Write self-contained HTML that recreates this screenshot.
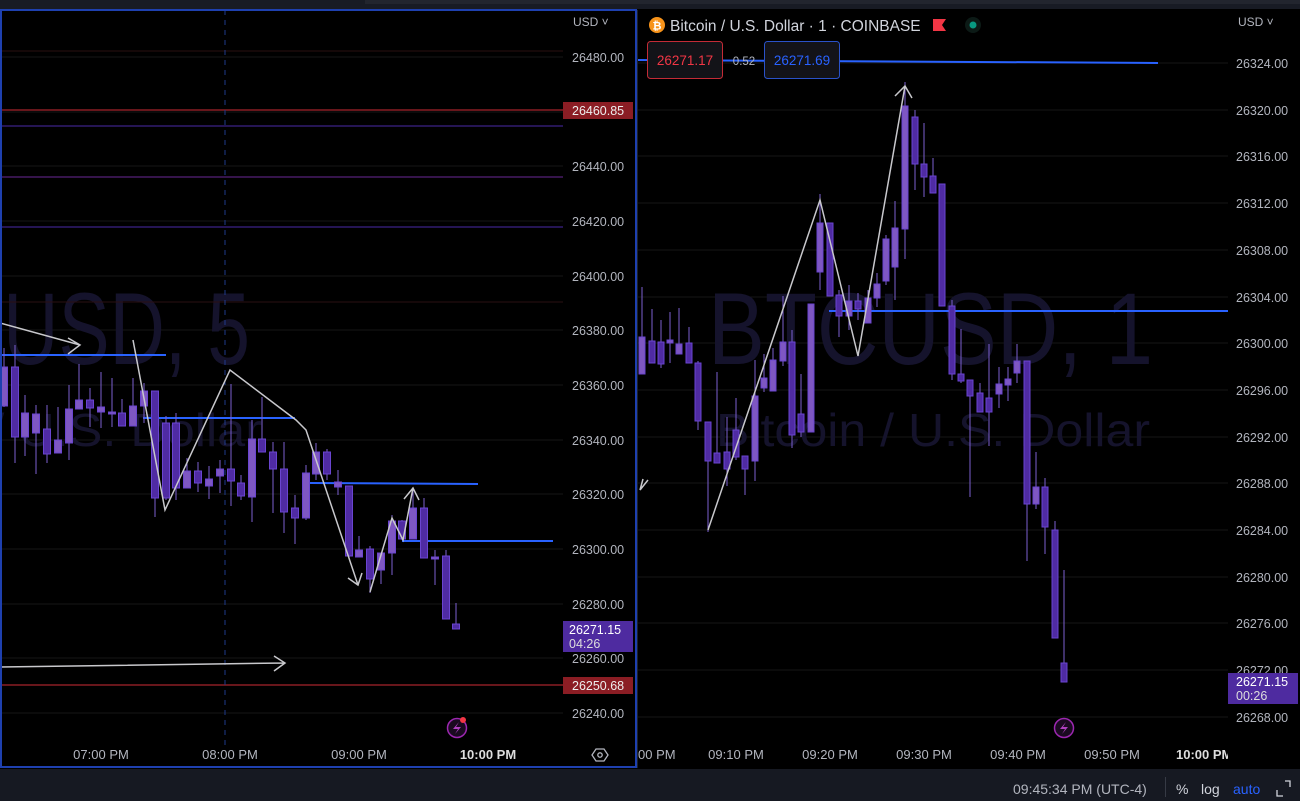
<!DOCTYPE html><html><head><meta charset="utf-8"><style>
body{margin:0;width:1300px;height:801px;background:#000;overflow:hidden;font-family:"Liberation Sans",sans-serif}
svg{position:absolute;left:0;top:0}
</style></head><body>
<svg width="1300" height="801" viewBox="0 0 1300 801" font-family="Liberation Sans, sans-serif">
<rect width="1300" height="801" fill="#000"/>
<rect x="0" y="0" width="1300" height="9" fill="#181b24"/>
<rect x="365" y="0" width="935" height="4" fill="#22252e"/>
<rect x="0" y="769" width="1300" height="32" fill="#161922"/>
<g stroke="#161616" stroke-width="1">
<line x1="0" y1="57" x2="563" y2="57"/><line x1="0" y1="112" x2="563" y2="112"/><line x1="0" y1="166" x2="563" y2="166"/><line x1="0" y1="221" x2="563" y2="221"/><line x1="0" y1="276" x2="563" y2="276"/><line x1="0" y1="330" x2="563" y2="330"/><line x1="0" y1="385" x2="563" y2="385"/><line x1="0" y1="440" x2="563" y2="440"/><line x1="0" y1="494" x2="563" y2="494"/><line x1="0" y1="549" x2="563" y2="549"/><line x1="0" y1="604" x2="563" y2="604"/><line x1="0" y1="658" x2="563" y2="658"/><line x1="0" y1="713" x2="563" y2="713"/>
</g>
<g stroke="#161616">
<line x1="638" y1="63" x2="1228" y2="63"/><line x1="638" y1="110" x2="1228" y2="110"/><line x1="638" y1="156" x2="1228" y2="156"/><line x1="638" y1="203" x2="1228" y2="203"/><line x1="638" y1="250" x2="1228" y2="250"/><line x1="638" y1="297" x2="1228" y2="297"/><line x1="638" y1="343" x2="1228" y2="343"/><line x1="638" y1="390" x2="1228" y2="390"/><line x1="638" y1="437" x2="1228" y2="437"/><line x1="638" y1="483" x2="1228" y2="483"/><line x1="638" y1="530" x2="1228" y2="530"/><line x1="638" y1="577" x2="1228" y2="577"/><line x1="638" y1="623" x2="1228" y2="623"/><line x1="638" y1="670" x2="1228" y2="670"/><line x1="638" y1="717" x2="1228" y2="717"/>
</g>
<g fill="#15132c">
<text x="-150" y="364" font-size="102" textLength="400" lengthAdjust="spacingAndGlyphs">BTCUSD, 5</text>
<text x="-175" y="446" font-size="46" textLength="437" lengthAdjust="spacingAndGlyphs">Bitcoin / U.S. Dollar</text>
<text x="708" y="364" font-size="102" textLength="445" lengthAdjust="spacingAndGlyphs">BTCUSD, 1</text>
<text x="716" y="446" font-size="46" textLength="434" lengthAdjust="spacingAndGlyphs">Bitcoin / U.S. Dollar</text>
</g>
<line x1="0" y1="51" x2="563" y2="51" stroke="#2a1010"/>
<line x1="0" y1="110" x2="563" y2="110" stroke="#8b1d24" stroke-width="1.5"/>
<line x1="0" y1="126" x2="563" y2="126" stroke="#4a2aa8"/>
<line x1="0" y1="177" x2="563" y2="177" stroke="#6a2896"/>
<line x1="0" y1="227" x2="563" y2="227" stroke="#4a2aa8"/>
<line x1="0" y1="302" x2="563" y2="302" stroke="#2a0f12"/>
<line x1="0" y1="685" x2="563" y2="685" stroke="#8b1d24" stroke-width="1.5"/>
<line x1="225" y1="10" x2="225" y2="745" stroke="#1e3a8a" stroke-dasharray="5,5"/>
<g stroke="#2962ff" stroke-width="2">
<line x1="0" y1="355" x2="166" y2="355"/><line x1="143" y1="418" x2="295" y2="418"/><line x1="310" y1="483" x2="478" y2="484"/><line x1="402" y1="541" x2="553" y2="541"/>
<line x1="636" y1="60" x2="1158" y2="63"/><line x1="829" y1="311" x2="1228" y2="311"/>
</g>
<g stroke="#7b5fd0" stroke-width="1">
<path d="M4 348V407M15 345V463M25 395V456M36 405V474M47 405V463M58 407V453M69 385V460M79 364V409M90 388V427M101 372V428M112 378V427M122 399V426M133 378V426M144 383V423M155 391V517M166 416V500M176 413V500M187 458V488M198 462V492M209 466V499M220 460V493M231 384V506M241 475V500M252 420V522M262 397V452M273 442V513M284 442V533M295 495V544M306 465V520M316 443V480M327 449V480M338 470V495M349 486V557M359 536V557M370 546V593M381 553V584M392 515V575M402 520V540M413 487V539M424 498V558M435 550V585M446 550V619M456 603V629"/>
<path d="M642 287V374M652 309V363M661 320V368M670 312V363M679 308V354M689 327V363M698 361V430M708 422V532M717 372V463M727 417V486M736 398V460M745 456V495M755 360V481M764 354V392M773 348V391M783 296V366M792 330V448M801 374V437M811 304V432M820 194V290M830 223V296M839 290V337M849 285V330M858 293V320M868 290V323M877 273V307M886 235V285M895 201V300M905 82V259M915 110V190M924 123V197M933 158V193M942 184V306M952 300V380M961 329V383M970 380V497M980 383V412M989 344V446M999 367V408M1008 367V401M1017 344V383M1027 361V561M1036 452V509M1045 478V554M1055 521V638M1064 570V682"/>
</g>
<g stroke="#6a45d0" stroke-width="1">
<g fill="#7e57c2">
<rect x="0.5" y="367" width="7" height="39"/><rect x="21.5" y="413" width="7" height="24"/><rect x="32.5" y="414" width="7" height="19"/><rect x="54.5" y="440" width="7" height="13"/><rect x="65.5" y="409" width="7" height="34"/><rect x="75.5" y="400" width="7" height="9"/><rect x="97.5" y="407" width="7" height="5"/><rect x="108.5" y="412" width="7" height="2"/><rect x="129.5" y="406" width="7" height="20"/><rect x="140.5" y="391" width="7" height="15"/><rect x="183.5" y="471" width="7" height="17"/><rect x="205.5" y="479" width="7" height="7"/><rect x="216.5" y="469" width="7" height="7"/><rect x="248.5" y="439" width="7" height="58"/><rect x="302.5" y="473" width="7" height="45"/><rect x="312.5" y="452" width="7" height="22"/><rect x="334.5" y="482" width="7" height="5"/><rect x="355.5" y="550" width="7" height="7"/><rect x="377.5" y="553" width="7" height="17"/><rect x="388.5" y="521" width="7" height="32"/><rect x="409.5" y="508" width="7" height="31"/><rect x="431.5" y="557" width="7" height="2"/>
<rect x="639" y="337" width="6" height="37"/><rect x="667" y="340" width="6" height="3"/><rect x="676" y="344" width="6" height="10"/><rect x="752" y="396" width="6" height="65"/><rect x="761" y="378" width="6" height="10"/><rect x="770" y="360" width="6" height="31"/><rect x="780" y="342" width="6" height="19"/><rect x="808" y="304" width="6" height="128"/><rect x="817" y="223" width="6" height="49"/><rect x="846" y="301" width="6" height="15"/><rect x="865" y="298" width="6" height="25"/><rect x="874" y="284" width="6" height="14"/><rect x="883" y="239" width="6" height="42"/><rect x="892" y="228" width="6" height="39"/><rect x="902" y="106" width="6" height="123"/><rect x="996" y="384" width="6" height="10"/><rect x="1005" y="379" width="6" height="6"/><rect x="1014" y="361" width="6" height="12"/><rect x="1033" y="487" width="6" height="17"/>
</g>
<g fill="#4f2ba3">
<rect x="11.5" y="367" width="7" height="70"/><rect x="43.5" y="429" width="7" height="25"/><rect x="86.5" y="400" width="7" height="8"/><rect x="118.5" y="413" width="7" height="13"/><rect x="151.5" y="391" width="7" height="107"/><rect x="162.5" y="423" width="7" height="75"/><rect x="172.5" y="423" width="7" height="65"/><rect x="194.5" y="471" width="7" height="12"/><rect x="227.5" y="469" width="7" height="12"/><rect x="237.5" y="483" width="7" height="13"/><rect x="258.5" y="439" width="7" height="13"/><rect x="269.5" y="452" width="7" height="17"/><rect x="280.5" y="469" width="7" height="43"/><rect x="291.5" y="508" width="7" height="10"/><rect x="323.5" y="452" width="7" height="22"/><rect x="345.5" y="486" width="7" height="70"/><rect x="366.5" y="549" width="7" height="30"/><rect x="398.5" y="521" width="7" height="18"/><rect x="420.5" y="508" width="7" height="50"/><rect x="442.5" y="556" width="7" height="63"/><rect x="452.5" y="624" width="7" height="5"/>
<rect x="649" y="341" width="6" height="22"/><rect x="658" y="342" width="6" height="22"/><rect x="686" y="343" width="6" height="20"/><rect x="695" y="363" width="6" height="58"/><rect x="705" y="422" width="6" height="39"/><rect x="714" y="453" width="6" height="10"/><rect x="724" y="452" width="6" height="17"/><rect x="733" y="430" width="6" height="27"/><rect x="742" y="456" width="6" height="13"/><rect x="789" y="342" width="6" height="93"/><rect x="798" y="414" width="6" height="18"/><rect x="827" y="223" width="6" height="73"/><rect x="836" y="295" width="6" height="21"/><rect x="855" y="301" width="6" height="8"/><rect x="912" y="117" width="6" height="47"/><rect x="921" y="164" width="6" height="13"/><rect x="930" y="176" width="6" height="17"/><rect x="939" y="184" width="6" height="122"/><rect x="949" y="306" width="6" height="68"/><rect x="958" y="374" width="6" height="7"/><rect x="967" y="380" width="6" height="16"/><rect x="977" y="393" width="6" height="19"/><rect x="986" y="398" width="6" height="14"/><rect x="1024" y="361" width="6" height="143"/><rect x="1042" y="487" width="6" height="40"/><rect x="1052" y="530" width="6" height="108"/><rect x="1061" y="663" width="6" height="19"/>
</g>
</g>
<g stroke="#c8c8cc" stroke-width="1.5" fill="none">
<path d="M0 323L80 345M68 338L80 345L68 354"/>
<path d="M133 340L165 510L230 370L296 420L306 430L358 585M348 578L358 585L362 573"/>
<path d="M370 592L392 518L403 540L413 488M404 499L413 488L419 500"/>
<path d="M0 667L285 663M274 656L285 663L274 671"/>
<path d="M643 479L640 490L648 480"/>
<path d="M708 530L820 200L858 356L905 86M895 96L905 86L912 98"/>
</g>
<rect x="1" y="10" width="635" height="757" fill="none" stroke="#1e40af" stroke-width="2"/>
<line x1="637.5" y1="10" x2="637.5" y2="768" stroke="#1e222d"/>
<g fill="#b2b5be" font-size="12.5">
<text x="573" y="26" font-size="12">USD ˅</text>
<text x="572" y="62">26480.00</text><text x="572" y="171">26440.00</text><text x="572" y="226">26420.00</text><text x="572" y="281">26400.00</text><text x="572" y="335">26380.00</text><text x="572" y="390">26360.00</text><text x="572" y="445">26340.00</text><text x="572" y="499">26320.00</text><text x="572" y="554">26300.00</text><text x="572" y="609">26280.00</text><text x="572" y="663">26260.00</text><text x="572" y="718">26240.00</text>
</g>
<rect x="563" y="102" width="70" height="17" fill="#8b1d24"/><text x="572" y="115" fill="#eee" font-size="12.5">26460.85</text>
<rect x="563" y="677" width="70" height="17" fill="#8b1d24"/><text x="572" y="690" fill="#eee" font-size="12.5">26250.68</text>
<rect x="563" y="621" width="70" height="31" fill="#4e2ba0"/><text x="569" y="634" fill="#fff" font-size="12.5">26271.15</text><text x="569" y="648" fill="#ddd" font-size="12.5">04:26</text>
<g fill="#b2b5be" font-size="12.5">
<text x="1238" y="26" font-size="12">USD ˅</text>
<text x="1236" y="68">26324.00</text><text x="1236" y="115">26320.00</text><text x="1236" y="161">26316.00</text><text x="1236" y="208">26312.00</text><text x="1236" y="255">26308.00</text><text x="1236" y="302">26304.00</text><text x="1236" y="348">26300.00</text><text x="1236" y="395">26296.00</text><text x="1236" y="442">26292.00</text><text x="1236" y="488">26288.00</text><text x="1236" y="535">26284.00</text><text x="1236" y="582">26280.00</text><text x="1236" y="628">26276.00</text><text x="1236" y="675">26272.00</text><text x="1236" y="722">26268.00</text>
</g>
<rect x="1228" y="673" width="70" height="31" fill="#4e2ba0"/><text x="1236" y="686" fill="#fff" font-size="12.5">26271.15</text><text x="1236" y="700" fill="#ddd" font-size="12.5">00:26</text>
<g fill="#b2b5be" font-size="13" text-anchor="middle">
<text x="101" y="759">07:00 PM</text><text x="230" y="759">08:00 PM</text><text x="359" y="759">09:00 PM</text><text x="488" y="759" fill="#ddd" font-weight="bold">10:00 PM</text>
<text x="736" y="759">09:10 PM</text><text x="830" y="759">09:20 PM</text><text x="924" y="759">09:30 PM</text><text x="1018" y="759">09:40 PM</text><text x="1112" y="759">09:50 PM</text>
</g>
<text x="638" y="759" fill="#b2b5be" font-size="13">00 PM</text>
<svg x="1150" y="740" width="78" height="25"><text x="26" y="19" fill="#ddd" font-size="13" font-weight="bold">10:00 PM</text></svg>
<path d="M596 749L604 749L608 755L604 761L596 761L592 755Z" fill="none" stroke="#b2b5be" stroke-width="1.3"/><circle cx="600" cy="755" r="2.2" fill="none" stroke="#b2b5be" stroke-width="1.3"/>
<circle cx="457" cy="728" r="9.5" fill="#1a0a20" stroke="#9c27b0" stroke-width="1.5"/><path d="M459 722L453 729H458L455 734L461 727H456Z" fill="#b040c0"/><circle cx="463" cy="720" r="3" fill="#f23645"/>
<circle cx="1064" cy="728" r="9.5" fill="#1a0a20" stroke="#9c27b0" stroke-width="1.5"/><path d="M1066 722L1060 729H1065L1062 734L1068 727H1063Z" fill="#b040c0"/>
<circle cx="657" cy="25" r="8" fill="#f7931a"/><text x="657" y="29.5" font-size="11" fill="#fff" text-anchor="middle" font-weight="bold">₿</text>
<text x="670" y="31" fill="#d1d4dc" font-size="15.5">Bitcoin / U.S. Dollar · 1 · COINBASE</text>
<path d="M933 19H946L942 25L946 31H933Z" fill="#f23645"/>
<circle cx="973" cy="25" r="8" fill="#0c1a16"/><circle cx="973" cy="25" r="3.5" fill="#089981"/>
<rect x="647.5" y="41.5" width="75" height="37" rx="3" fill="#131318" stroke="#c42b36"/><text x="685" y="65" fill="#f23645" font-size="13.5" text-anchor="middle">26271.17</text>
<text x="744" y="65" fill="#b2b5be" font-size="11.5" text-anchor="middle">0.52</text>
<rect x="764.5" y="41.5" width="75" height="37" rx="3" fill="#131318" stroke="#2a52c9"/><text x="802" y="65" fill="#2962ff" font-size="13.5" text-anchor="middle">26271.69</text>
<text x="1013" y="794" fill="#b2b5be" font-size="14">09:45:34 PM (UTC-4)</text>
<line x1="1165.5" y1="777" x2="1165.5" y2="797" stroke="#363a45"/>
<text x="1176" y="794" fill="#d1d4dc" font-size="14">%</text>
<text x="1201" y="794" fill="#d1d4dc" font-size="14">log</text>
<text x="1233" y="794" fill="#2962ff" font-size="14">auto</text>
<path d="M1277 790V796H1283M1285 781H1290V787" fill="none" stroke="#d1d4dc" stroke-width="1.3"/>
</svg>
</body></html>
